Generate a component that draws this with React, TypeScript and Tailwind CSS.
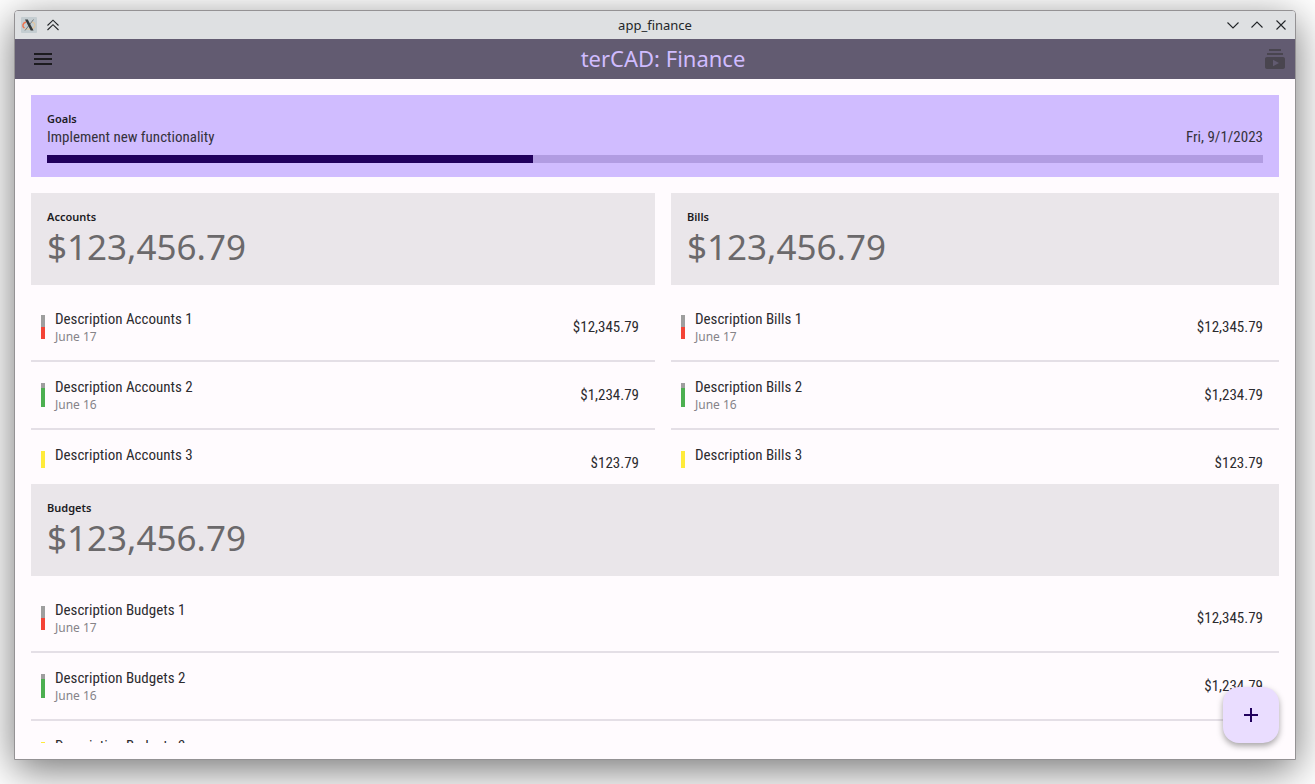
import React from "react";

type Tone = "red" | "green" | "yellow";

interface Entry {
  id: number;
  date: string;
  amount: string;
  tone: Tone;
  rest: string;
}

const entries: Entry[] = [
  { id: 1, date: "June 17", amount: "$12,345.79", tone: "red", rest: "50%" },
  { id: 2, date: "June 16", amount: "$1,234.79", tone: "green", rest: "20%" },
  { id: 3, date: "June 15", amount: "$123.79", tone: "yellow", rest: "0%" },
];

const tones: Record<Tone, string> = {
  red: "bg-[#f44336]",
  green: "bg-[#4caf50]",
  yellow: "bg-[#ffeb3b]",
};

const condensed = "font-['Roboto_Condensed','Liberation_Sans_Narrow',Roboto,sans-serif]";

function WindowBar() {
  const button = "flex h-7 w-6 items-center justify-center";
  const line = { fill: "none", stroke: "#232629", strokeWidth: 1.1 };
  return (
    <div className="flex h-7 shrink-0 items-center bg-[#dee0e2] text-[#232629]">
      <div className="flex flex-1 items-center pl-0.5">
        <button type="button" aria-label="Window menu" className={button}>
          <svg width="16" height="16" viewBox="0 0 16 16">
            <rect width="16" height="16" rx="1" fill="#c4cdd1" />
            <path d="M5 5C1.500 6 .8 9.500 3.500 11.200" fill="none" stroke="#ee7450" strokeWidth="1.500" />
            <path d="M3.500 11.200C7 13.200 13 12 13.800 9C14.200 7 13 5.600 11 5.200" fill="none" stroke="#dfc7a4" strokeWidth="1.200" />
            <path d="M12.500 2.500L4 13.500" stroke="#777c7e" strokeWidth="1" />
            <path d="M4 2.500h2.800l5.700 11H9.700z" fill="#34393b" />
          </svg>
        </button>
        <button type="button" aria-label="Shade window" className={button}>
          <svg width="16" height="16" viewBox="0 0 16 16" {...line}>
            <path d="M2.500 8.500L8 3.200l5.500 5.300M2.500 13L8 7.700l5.500 5.300" />
          </svg>
        </button>
      </div>
      <span className="font-['Noto_Sans',sans-serif] text-[13px] leading-5">app_finance</span>
      <div className="flex flex-1 items-center justify-end pr-0.5">
        <button type="button" aria-label="Minimize" className={button}>
          <svg width="16" height="16" viewBox="0 0 16 16" {...line}>
            <path d="M2.500 5.500L8 11l5.500-5.500" />
          </svg>
        </button>
        <button type="button" aria-label="Maximize" className={button}>
          <svg width="16" height="16" viewBox="0 0 16 16" {...line}>
            <path d="M2.500 10.500L8 5l5.500 5.500" />
          </svg>
        </button>
        <button type="button" aria-label="Close" className={button}>
          <svg width="16" height="16" viewBox="0 0 16 16" {...line}>
            <path d="M3.500 3.500l9 9M12.500 3.500l-9 9" />
          </svg>
        </button>
      </div>
    </div>
  );
}

function AppBar() {
  return (
    <header className="flex h-10 shrink-0 items-center bg-[#625b71]">
      <button type="button" aria-label="Open menu" className="flex h-10 w-14 items-center justify-center text-[#1c1b1f]">
        <svg width="24" height="24" viewBox="0 0 24 24" fill="currentColor">
          <path d="M3 18h18v-2H3v2zm0-5h18v-2H3v2zm0-7v2h18V6H3z" />
        </svg>
      </button>
      <h1 className="flex-1 pb-0.5 text-center text-[22px] leading-7 text-[#d0bcff]">terCAD: Finance</h1>
      <button type="button" aria-label="Subscriptions" className="flex h-10 w-10 items-center justify-center text-[#49454f]">
        <svg width="24" height="24" viewBox="0 0 24 24" fill="currentColor">
          <path d="M20 8H4V6h16v2zm-2-6H6v2h12V2zm4 10v8c0 1.100-.9 2-2 2H4c-1.100 0-2-.9-2-2v-8c0-1.100.9-2 2-2h16c1.100 0 2 .9 2 2zm-6 4l-6-3.270v6.530L16 16z" />
        </svg>
      </button>
    </header>
  );
}

function Goals() {
  return (
    <section className="shrink-0 bg-[#d0bcff] px-4 pt-4 pb-3.5 text-[#1c1b1f]">
      <h2 className="text-[11px] leading-4 font-semibold">Goals</h2>
      <div className={`flex justify-between text-[15px] leading-5 text-[#35323c] ${condensed}`}>
        <p>Implement new functionality</p>
        <p>Fri, 9/1/2023</p>
      </div>
      <div role="progressbar" aria-label="Goal progress" aria-valuenow={40} className="mt-2 h-2 bg-[#b19ce2]">
        <div className="h-2 w-2/5 bg-[#21005d]" />
      </div>
    </section>
  );
}

function Panel({ name }: { name: string }) {
  return (
    <section className="flex min-h-0 flex-1 flex-col">
      <div className="shrink-0 bg-[#eae6ea] p-4">
        <h2 className="text-[11px] leading-4 font-semibold text-[#1c1b1f]">{name}</h2>
        <p className="text-[35px] leading-11 text-[#6b696b]">$123,456.79</p>
      </div>
      <ul className="min-h-0 flex-1 overflow-hidden pt-[9px]">
        {entries.map((entry) => (
          <li key={entry.id} className="flex h-[68px] items-center gap-2.5 border-b-2 border-[#e4dfe6] pr-4 pl-2.5 text-[#2c2b2f]">
            <div className={`h-6 w-1 ${tones[entry.tone]}`}>
              <div className="bg-[#9e9e9e]" style={{ height: entry.rest }} />
            </div>
            <div className="flex-1 pt-0.5">
              <p className={`text-[15px] leading-[18px] ${condensed}`}>
                Description {name} {entry.id}
              </p>
              <p className="text-[12px] leading-[18px] text-[#868388]">{entry.date}</p>
            </div>
            <p className={`text-[15px] leading-[18px] ${condensed}`}>{entry.amount}</p>
          </li>
        ))}
      </ul>
    </section>
  );
}

export default function App() {
  return (
    <div className="flex h-screen flex-col overflow-hidden bg-white pt-2.5 pr-[19px] pb-6 pl-3.5 font-['Noto_Sans',sans-serif]">
      <div className="relative flex min-h-0 flex-1 flex-col overflow-hidden rounded-t border border-[#949294] bg-[#fffbfe] shadow-[0_10px_40px_rgba(0,0,0,0.55)]">
        <WindowBar />
        <AppBar />
        <main className="flex min-h-0 flex-1 flex-col gap-4 p-4">
          <Goals />
          <div className="grid min-h-0 flex-1 grid-rows-2">
            <div className="grid min-h-0 grid-cols-2">
              <div className="flex min-h-0 min-w-0">
                <Panel name="Accounts" />
              </div>
              <div className="flex min-h-0 min-w-0 pl-4">
                <Panel name="Bills" />
              </div>
            </div>
            <div className="flex min-h-0 pt-4">
              <Panel name="Budgets" />
            </div>
          </div>
        </main>
        <button
          type="button"
          aria-label="Add"
          className="absolute right-4 bottom-4 flex h-14 w-14 items-center justify-center rounded-2xl bg-[#eaddff] text-[#21005d] shadow-[0_3px_6px_rgba(0,0,0,0.35)]"
        >
          <svg width="24" height="24" viewBox="0 0 24 24" fill="currentColor">
            <path d="M19 13h-6v6h-2v-6H5v-2h6V5h2v6h6v2z" />
          </svg>
        </button>
      </div>
    </div>
  );
}
